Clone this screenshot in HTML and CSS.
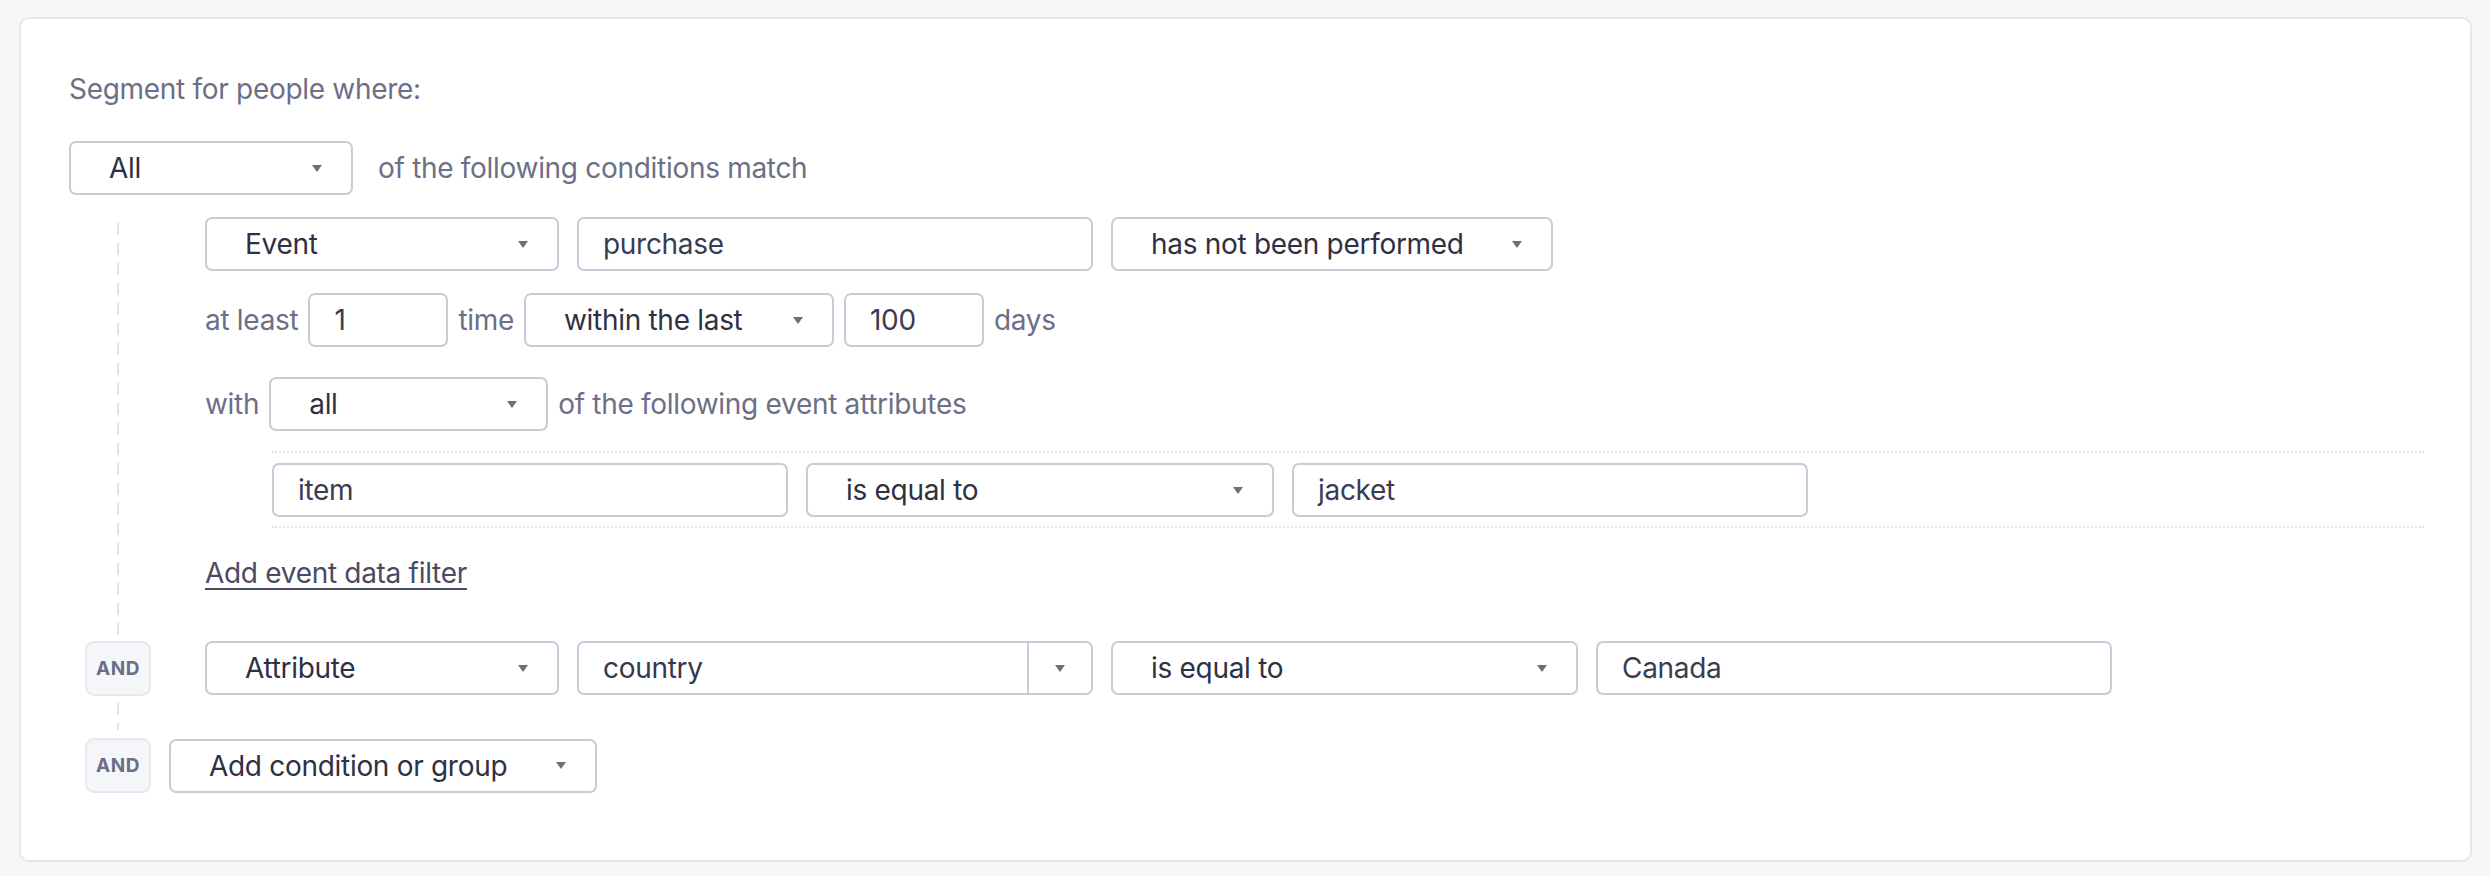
FILE: index.html
```html
<!DOCTYPE html>
<html lang="en">
<head>
    <meta charset="UTF-8">
    <meta name="viewport" content="width=device-width, initial-scale=1.0">
    <link rel="stylesheet" href="styles.css">
    <title>Segment builder</title>
</head>
<body>
    <div class="card">
        <p class="title">Segment for people where:</p>

        <div class="match-row">
            <div class="select w-all">All <span class="caret"></span></div>
            <span class="label">of the following conditions match</span>
        </div>

        <div class="group">
            <!-- first condition: event -->
            <div class="cond">
                <div class="slot"></div>
                <div class="cond-body">
                    <div class="row">
                        <div class="select w-type">Event <span class="caret"></span></div>
                        <div class="field w-wide">purchase</div>
                        <div class="select w-perf">has not been performed <span class="caret"></span></div>
                    </div>
                    <div class="row row-tight row-2">
                        <span class="label">at least</span>
                        <div class="field w-num">1</div>
                        <span class="label">time</span>
                        <div class="select w-within">within the last <span class="caret"></span></div>
                        <div class="field w-num">100</div>
                        <span class="label">days</span>
                    </div>
                    <div class="row row-tight row-3">
                        <span class="label">with</span>
                        <div class="select w-attrs">all <span class="caret"></span></div>
                        <span class="label">of the following event attributes</span>
                    </div>
                    <div class="filters">
                        <div class="row">
                            <div class="field w-wide">item</div>
                            <div class="select w-op">is equal to <span class="caret"></span></div>
                            <div class="field w-wide">jacket</div>
                        </div>
                    </div>
                    <a class="add-link" href="#">Add event data filter</a>
                </div>
            </div>

            <!-- second condition: attribute -->
            <div class="cond cond-and">
                <div class="slot"><span class="badge">AND</span></div>
                <div class="cond-body">
                    <div class="row">
                        <div class="select w-type">Attribute <span class="caret"></span></div>
                        <div class="combo">
                            <span class="combo-text">country</span>
                            <span class="combo-btn"><span class="caret"></span></span>
                        </div>
                        <div class="select w-op2">is equal to <span class="caret"></span></div>
                        <div class="field w-wide">Canada</div>
                    </div>
                </div>
            </div>

            <div class="add-row">
                <span class="badge">AND</span>
                <div class="select w-add">Add condition or group <span class="caret"></span></div>
            </div>
        </div>
    </div>
</body>
</html>
```

FILE: styles.css
```css
body{ margin: 0; background-color: #f6f7f9; font-family: "Inter", "Liberation Sans", sans-serif; font-size: 28px; letter-spacing: -0.3px; color: #36384c; }
.card{ margin: 17px 18px 14px 19px; background: #fff; border: 2px solid #e7e8ed; border-radius: 10px; padding: 50px 46px 67px 48px; }
.title{ margin: 0; line-height: 40px; color: #6c6f87; }
.label{ color: #6c6f87; white-space: nowrap; }

.match-row{ display: flex; align-items: center; gap: 25px; margin-top: 32px; }

/* dropdowns and text boxes */
.select, .field, .combo{ box-sizing: border-box; height: 54px; border: 2px solid #cbcad8; border-radius: 7px; background: #fff; flex: none; display: flex; align-items: center; white-space: nowrap; }
.select{ justify-content: space-between; padding: 0 29px 0 38px; color: #2f3043; }
.field{ padding: 0 24px; color: #3a3c51; }
.caret{ width: 0; height: 0; border-left: 5px solid transparent; border-right: 5px solid transparent; border-top: 7px solid #6b6d80; }

.w-all{ width: 284px; }
.w-type{ width: 354px; }
.w-wide{ width: 516px; }
.w-perf{ width: 442px; }
.w-num{ width: 140px; }
.w-within{ width: 310px; }
.w-attrs{ width: 279px; }
.w-op{ width: 468px; }
.w-op2{ width: 467px; }
.w-add{ width: 428px; }

.combo{ width: 516px; }
.combo-text{ flex: 1; padding-left: 24px; }
.combo-btn{ box-sizing: border-box; width: 64px; height: 100%; border-left: 2px solid #cbcad8; display: flex; align-items: center; justify-content: center; }

/* condition tree */
.group{ position: relative; margin-top: 22px; }
.group::before{ content: ""; position: absolute; left: 48px; top: 6px; bottom: 63px; width: 2px; background: repeating-linear-gradient(to bottom, #e3e4ea 0 12px, transparent 12px 20px); }
.cond{ display: flex; position: relative; }
.slot{ width: 136px; flex: none; padding-left: 16px; box-sizing: border-box; }
.cond-body{ flex: 1; }
.row{ display: flex; align-items: center; gap: 18px; }
.row-tight{ gap: 10px; }
.row-2{ margin-top: 22px; }
.row-3{ margin-top: 30px; }

.filters{ margin: 20px 0 0 67px; padding: 10px 0 9px; border-top: 2px dotted #e4e5ea; border-bottom: 2px dotted #e4e5ea; }
.add-link{ display: inline-block; margin-top: 25px; line-height: 40px; color: #4a4b63; text-decoration: underline; text-decoration-thickness: 2px; text-underline-offset: 5px; }

.cond-and{ margin-top: 48px; }
.badge{ position: relative; box-sizing: border-box; display: flex; align-items: center; justify-content: center; width: 66px; height: 55px; background: #f5f6f9; border: 2px solid #e7e8ee; border-radius: 9px; font-size: 19px; font-weight: 700; color: #6b6e85; letter-spacing: 0.5px; }
.add-row{ display: flex; align-items: center; gap: 18px; margin-top: 42px; padding-left: 16px; }
```
